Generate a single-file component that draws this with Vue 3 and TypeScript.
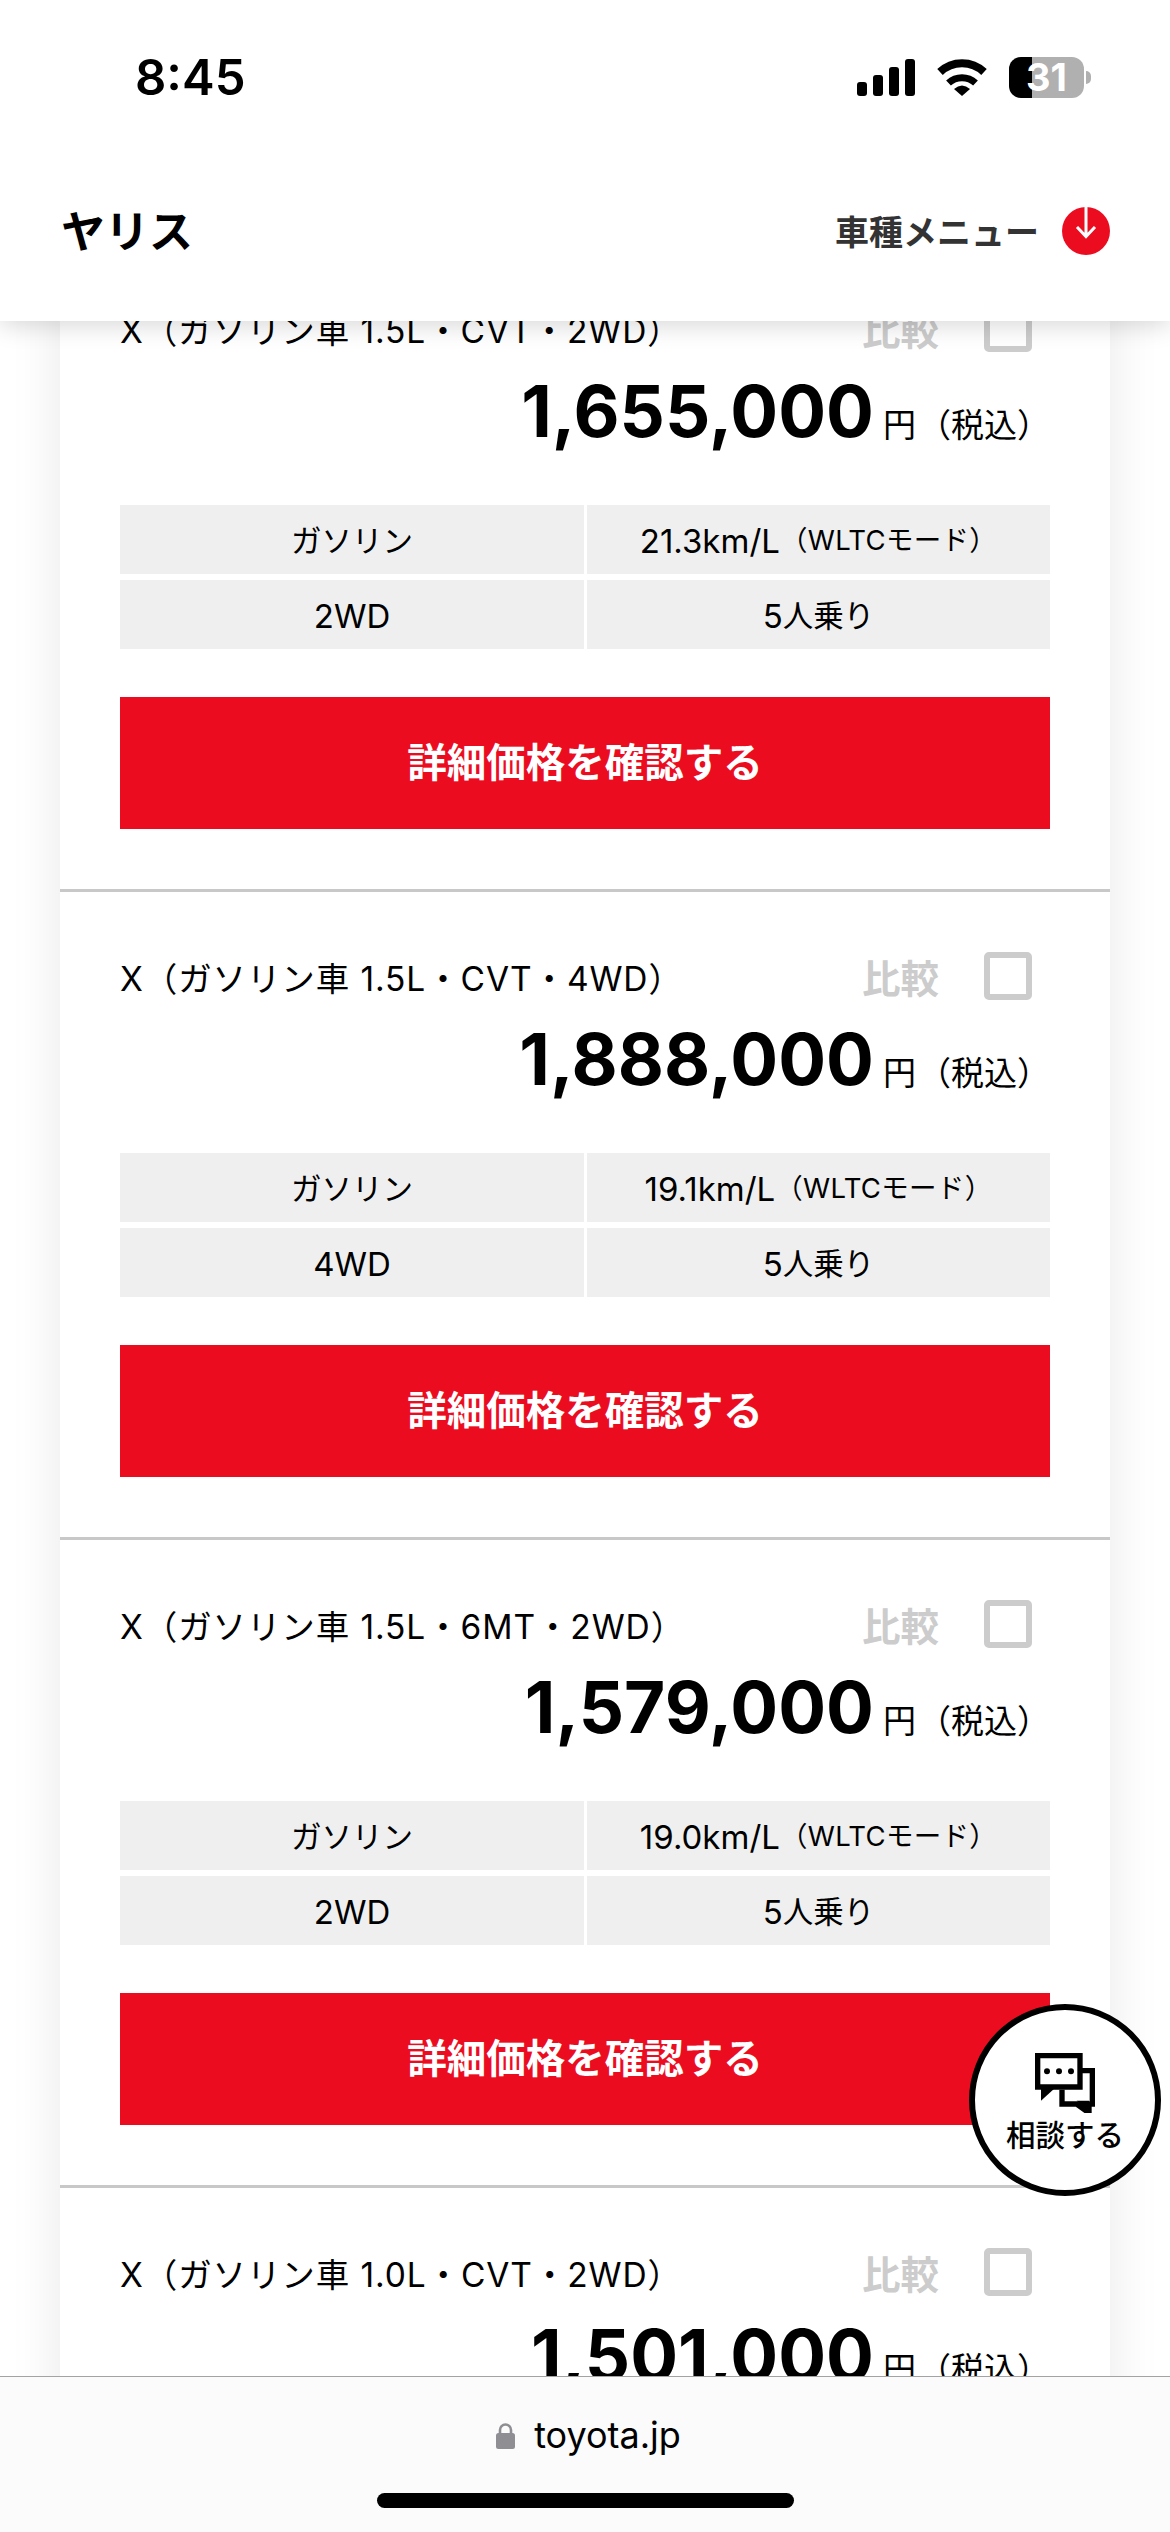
<script setup lang="ts">
interface Spec {
  fuelEconomy: string
  drive: string
}
interface Grade {
  title: string
  price: string
  spec?: Spec
}

const grades: Grade[] = [
  { title: 'X（ガソリン車 1.5L・CVT・2WD）', price: '1,655,000', spec: { fuelEconomy: '21.3km/L', drive: '2WD' } },
  { title: 'X（ガソリン車 1.5L・CVT・4WD）', price: '1,888,000', spec: { fuelEconomy: '19.1km/L', drive: '4WD' } },
  { title: 'X（ガソリン車 1.5L・6MT・2WD）', price: '1,579,000', spec: { fuelEconomy: '19.0km/L', drive: '2WD' } },
  { title: 'X（ガソリン車 1.0L・CVT・2WD）', price: '1,501,000' },
]
</script>

<template>
  <div class="page">
    <header class="header">
      <div class="status">
        <span class="time">8:45</span>
        <div class="status-icons">
          <svg class="signal" width="58" height="37" viewBox="0 0 58 37" aria-hidden="true">
            <rect x="0" y="23" width="10" height="14" rx="3" />
            <rect x="16" y="16" width="10" height="21" rx="3" />
            <rect x="32" y="8" width="10" height="29" rx="3" />
            <rect x="48" y="0" width="10" height="37" rx="3" />
          </svg>
          <svg class="wifi" width="50" height="37" viewBox="0 0 50 37" aria-hidden="true">
            <path d="M3 13 A32 32 0 0 1 47 13" fill="none" stroke="#000" stroke-width="8" />
            <path d="M11.5 24 A20 20 0 0 1 38.5 24" fill="none" stroke="#000" stroke-width="7" />
            <path d="M17 30 Q25 23 33 30 L25 37 Z" />
          </svg>
          <div class="battery">
            <div class="battery-body">31</div>
            <div class="battery-tip"></div>
          </div>
        </div>
      </div>
      <div class="nav">
        <span class="model">ヤリス</span>
        <div class="menu">
          <span class="menu-label">車種メニュー</span>
          <svg class="menu-icon" width="48" height="48" viewBox="0 0 48 48" aria-hidden="true">
            <circle cx="24" cy="24" r="24" fill="#ec0c20" />
            <path d="M24 0 V29 M15 20 L24 29.5 L33 20" fill="none" stroke="#fff" stroke-width="3" />
          </svg>
        </div>
      </div>
    </header>

    <main class="scroller">
      <div class="list">
        <section v-for="g in grades" :key="g.title" class="card">
          <div class="head">
            <span class="title">{{ g.title }}</span>
            <div class="compare">
              <span class="compare-label">比較</span>
              <span class="checkbox"></span>
            </div>
          </div>
          <div class="price-row">
            <span class="price">{{ g.price }}</span>
            <span class="yen">円</span>
            <span class="tax">（税込）</span>
          </div>
          <template v-if="g.spec">
            <div class="specs">
              <div class="cell">ガソリン</div>
              <div class="cell"><span class="num">{{ g.spec.fuelEconomy }}</span><span class="mode">（WLTCモード）</span></div>
              <div class="cell"><span class="num">{{ g.spec.drive }}</span></div>
              <div class="cell"><span class="num">5</span>人乗り</div>
            </div>
            <div class="cta"><span class="cta-label">詳細価格を確認する</span></div>
          </template>
        </section>
      </div>
    </main>

    <footer class="browser">
      <div class="address">
        <svg width="19" height="27" viewBox="0 0 19 27" aria-hidden="true">
          <path d="M4 12 V8 a5.5 5.5 0 0 1 11 0 V12" fill="none" stroke="#8e8e93" stroke-width="2.6" />
          <rect x="0" y="11" width="19" height="16" rx="2.5" fill="#8e8e93" />
        </svg>
        <span class="domain">toyota.jp</span>
      </div>
      <div class="home"></div>
    </footer>

    <div class="consult">
      <svg width="60" height="60" viewBox="0 0 180 180" aria-hidden="true">
        <path d="M81 110 V153 H125 L162 180 V153 H172 V53 H135" fill="#fff" stroke="#000" stroke-width="16" stroke-linejoin="miter" />
        <path d="M125 143 L162 180 V143 Z" fill="#000" />
        <path d="M8 8 H135 V102 H60 L18 143 V102 H8 Z" fill="#fff" stroke="none" />
        <path d="M8 8 H135 V102 H8 Z" fill="none" stroke="#000" stroke-width="16" />
        <path d="M18 105 V143 L60 105 Z" fill="#000" />
        <circle cx="36" cy="55" r="9" />
        <circle cx="72" cy="55" r="9" />
        <circle cx="108" cy="55" r="9" />
      </svg>
      <span class="consult-label">相談する</span>
    </div>
  </div>
</template>

<style scoped>
.page {
  position: relative;
  width: 1170px;
  height: 2532px;
  overflow: hidden;
  display: flex;
  flex-direction: column;
  background: #fff;
  color: #000;
  font-family: "Noto Sans CJK JP", "Noto Sans", sans-serif;
}

.header {
  position: relative;
  z-index: 2;
  flex: none;
  height: 321px;
  background: #fff;
  box-shadow: 0 4px 24px rgba(0, 0, 0, 0.16);
}

.status {
  height: 155px;
  padding: 0 79px 0 135px;
  box-sizing: border-box;
  display: flex;
  align-items: center;
  justify-content: space-between;
}

.time {
  font-family: Inter, "Liberation Sans", sans-serif;
  font-size: 49px;
  font-weight: 600;
  line-height: 1;
}

.status-icons {
  display: flex;
  align-items: center;
  gap: 22px;
}

.battery {
  display: flex;
  align-items: center;
  gap: 2px;
}

.battery-body {
  width: 75px;
  height: 41px;
  border-radius: 12px;
  background: linear-gradient(to right, #000 23px, #b0b0b0 23px);
  color: #fff;
  font-family: Inter, "Liberation Sans", sans-serif;
  font-size: 38px;
  font-weight: 700;
  line-height: 41px;
  text-align: center;
}

.battery-tip {
  width: 5px;
  height: 13px;
  border-radius: 0 6px 6px 0;
  background: #b0b0b0;
}

.nav {
  height: 152px;
  padding: 0 60px 0 61px;
  display: flex;
  align-items: center;
  justify-content: space-between;
}

.model {
  padding-bottom: 4px;
  font-size: 44px;
  font-weight: 700;
  line-height: 1;
}

.menu {
  display: flex;
  align-items: center;
  gap: 23px;
}

.menu-label {
  font-size: 34px;
  font-weight: 700;
  line-height: 1;
  color: #333;
}

.scroller {
  flex: 1;
  min-height: 0;
  overflow: hidden;
}

.list {
  width: 1050px;
  margin: -77px auto 0;
  background: #fff;
  box-shadow: 0 0 50px rgba(0, 0, 0, 0.09);
}

.card {
  box-sizing: border-box;
  height: 648px;
  padding: 60px 60px 60px;
  border-bottom: 3px solid #c8c8c8;
}

.head {
  height: 48px;
  display: flex;
  align-items: center;
  justify-content: space-between;
}

.title {
  margin-top: 6px;
  font-family: Inter, "Noto Sans CJK JP", sans-serif;
  font-size: 33.5px;
  line-height: 48px;
  letter-spacing: 0.9px;
}

.compare {
  display: flex;
  align-items: center;
  gap: 45px;
  margin-right: 18px;
}

.compare-label {
  font-size: 38.5px;
  font-weight: 700;
  line-height: 48px;
  color: #ccc;
}

.checkbox {
  box-sizing: border-box;
  width: 48px;
  height: 48px;
  border: 6px solid #ccc;
  border-radius: 5px;
}

.price-row {
  height: 105px;
  margin-top: 7px;
  display: flex;
  align-items: baseline;
  justify-content: flex-end;
}

.price {
  font-family: Inter, "Liberation Sans", sans-serif;
  font-size: 71px;
  font-weight: 700;
  line-height: 105px;
}

.yen {
  margin-left: 9px;
  font-size: 33px;
}

.tax {
  margin-left: 2px;
  font-size: 33px;
}

.specs {
  margin-top: 41px;
  display: grid;
  grid-template-columns: 464px 463px;
  grid-auto-rows: 69px;
  column-gap: 3px;
  row-gap: 6px;
}

.cell {
  box-sizing: border-box;
  padding-top: 3px;
  display: flex;
  align-items: center;
  justify-content: center;
  background: #efefef;
  font-family: Inter, "Noto Sans CJK JP", sans-serif;
  font-size: 30.5px;
  line-height: 1;
}

.num {
  font-size: 33px;
}

.mode {
  font-size: 27.5px;
  letter-spacing: 0.3px;
}

.cta {
  height: 132px;
  margin-top: 48px;
  display: flex;
  align-items: center;
  justify-content: center;
  background: #ec0c20;
  color: #fff;
}

.cta-label {
  padding-bottom: 6px;
  font-size: 39.5px;
  font-weight: 700;
  line-height: 1;
}

.browser {
  position: relative;
  z-index: 2;
  flex: none;
  box-sizing: border-box;
  height: 156px;
  border-top: 1px solid #a3a3a3;
  background: #fbfbfb;
  display: flex;
  flex-direction: column;
  align-items: center;
}

.address {
  height: 116px;
  display: flex;
  align-items: center;
  gap: 19px;
  margin-left: 7px;
}

.domain {
  font-family: Inter, "Liberation Sans", sans-serif;
  font-size: 36px;
  line-height: 1;
}

.home {
  width: 417px;
  height: 15px;
  border-radius: 8px;
  background: #000;
}

.consult {
  position: absolute;
  z-index: 1;
  left: 969px;
  top: 2004px;
  box-sizing: border-box;
  width: 192px;
  height: 192px;
  border: 6px solid #000;
  border-radius: 50%;
  background: #fff;
  display: flex;
  flex-direction: column;
  align-items: center;
  justify-content: flex-start;
  padding-top: 43px;
}

.consult-label {
  font-size: 29.5px;
  font-weight: 500;
  line-height: 40px;
  white-space: nowrap;
}
</style>
